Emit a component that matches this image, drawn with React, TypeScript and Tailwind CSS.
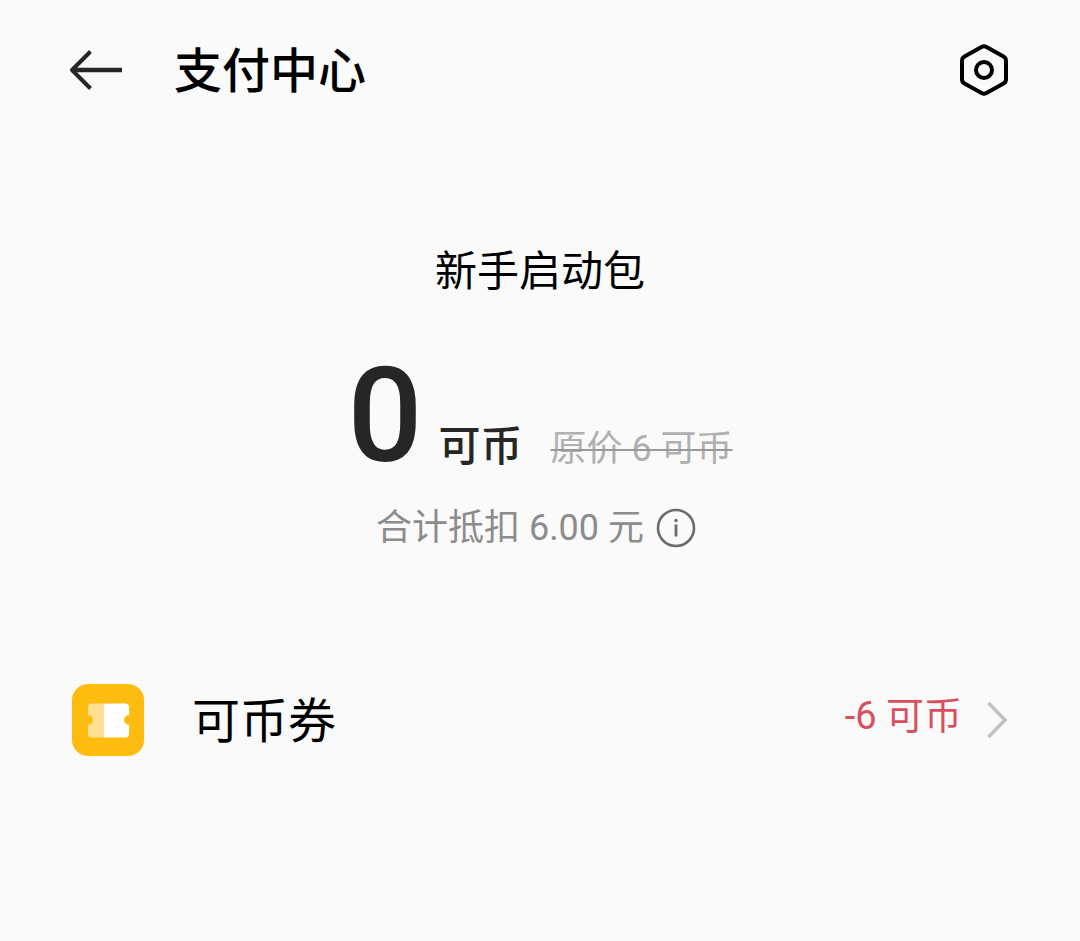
import type { ReactNode } from "react";

function BackIcon() {
  return (
    <svg width="56" height="44" viewBox="0 0 56 44" fill="none" stroke="#262626" strokeWidth="4" aria-hidden="true">
      <path d="M54 22H4" strokeWidth="4.6" />
      <path d="M22.5 3.5 4 22l18.500 18.500" strokeLinejoin="round" />
    </svg>
  );
}

function SettingsIcon() {
  return (
    <svg width="48" height="52" viewBox="0 0 48 52" fill="none" stroke="#000" strokeWidth="4" aria-hidden="true">
      <path
        d="M21.500 2.900a5 5 0 0 1 5 0l17 9.500a5 5 0 0 1 2.500 4.300v18.600a5 5 0 0 1-2.500 4.300l-17 9.500a5 5 0 0 1-5 0l-17-9.500a5 5 0 0 1-2.500-4.300V16.700a5 5 0 0 1 2.500-4.300z"
        strokeLinejoin="round"
      />
      <circle cx="24" cy="26" r="8" />
    </svg>
  );
}

function InfoIcon() {
  return (
    <svg width="40" height="40" viewBox="0 0 40 40" fill="none" aria-hidden="true">
      <circle cx="20" cy="20" r="18" stroke="#6b6b6b" strokeWidth="2.600" />
      <circle cx="20" cy="12.500" r="1.700" fill="#6b6b6b" />
      <path d="M20 16.500v12" stroke="#6b6b6b" strokeWidth="2.800" />
    </svg>
  );
}

function CouponIcon() {
  return (
    <svg width="72" height="72" viewBox="0 0 72 72" aria-hidden="true">
      <rect width="72" height="72" rx="16" fill="#ffbc10" />
      <path d="M32 19.500H20a4 4 0 0 0-4 4v7.500a5 5 0 0 1 0 10v8.500a4 4 0 0 0 4 4h12z" fill="#ffdf91" />
      <path d="M32 19.500h21a4 4 0 0 1 4 4v7.500a5 5 0 0 0 0 10v8.500a4 4 0 0 1-4 4H32z" fill="#fff" />
    </svg>
  );
}

function ChevronIcon() {
  return (
    <svg width="22" height="40" viewBox="0 0 22 40" fill="none" stroke="#c2c2c2" strokeWidth="3.500" aria-hidden="true">
      <path d="M2.500 3 19 20 2.500 37" />
    </svg>
  );
}

function IconButton({ label, children }: { label: string; children: ReactNode }) {
  return (
    <button type="button" aria-label={label} className="shrink-0 cursor-pointer">
      {children}
    </button>
  );
}

export default function App() {
  return (
    <div className="min-h-screen bg-[#fafafa] font-[Roboto,'Noto_Sans_CJK_SC',sans-serif] text-black">
      <header className="flex h-35 items-center pr-18 pl-17">
        <IconButton label="返回">
          <BackIcon />
        </IconButton>
        <h1 className="ml-[50px] flex-1 pt-1 text-5xl font-medium">支付中心</h1>
        <IconButton label="设置">
          <SettingsIcon />
        </IconButton>
      </header>

      <main>
        <section className="flex flex-col items-center pt-25">
          <h2 className="text-[42px] leading-16">新手启动包</h2>

          <div className="mt-8 flex items-baseline text-[#262626]">
            <span className="text-[132px] leading-40 font-medium">0</span>
            <span className="ml-4 text-[42px] leading-16 font-medium">可币</span>
            <del className="ml-7 text-4xl leading-14 text-[#b0b0b0] decoration-[#999999] decoration-2">
              原价 6 可币
            </del>
          </div>

          <div className="mt-1 flex items-center gap-3 pr-2">
            <p className="text-4xl leading-14 text-[#8c8c8c]">合计抵扣 6.00 元</p>
            <IconButton label="抵扣说明">
              <InfoIcon />
            </IconButton>
          </div>
        </section>

        <button type="button" className="mt-26 flex w-full cursor-pointer items-center px-18 py-6 text-left">
          <CouponIcon />
          <span className="ml-12 flex-1 pt-1 text-5xl">可币券</span>
          <span className="pb-2 text-[38px] leading-14 text-[#d8505f]">-6 可币</span>
          <span className="ml-6">
            <ChevronIcon />
          </span>
        </button>
      </main>
    </div>
  );
}
